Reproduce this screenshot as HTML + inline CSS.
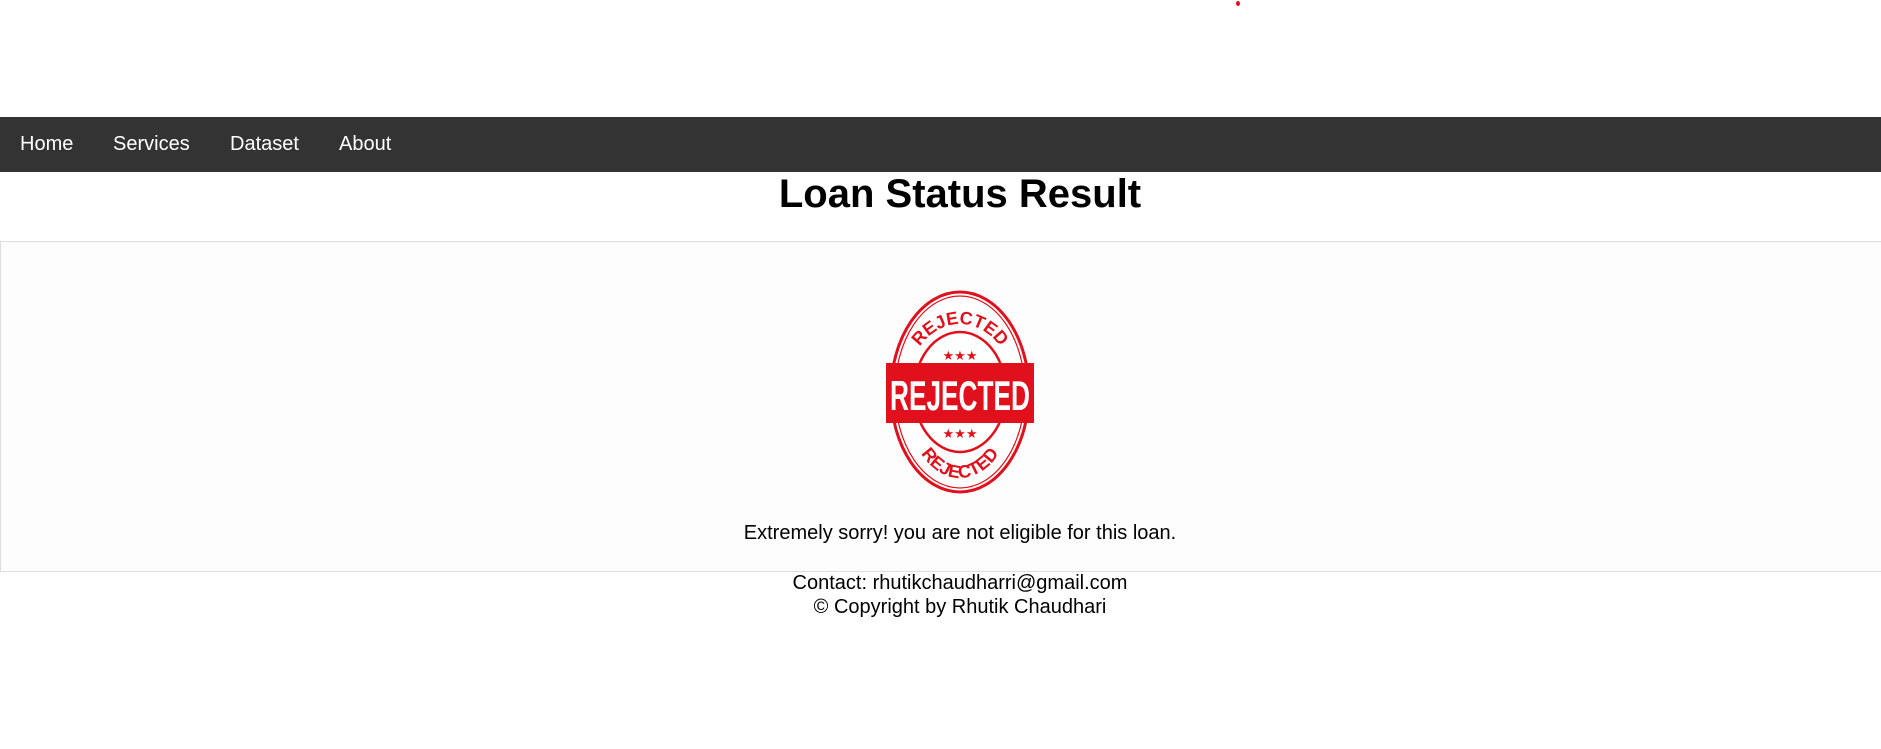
<!DOCTYPE html>
<html><head><meta charset="utf-8">
<style>
html,body{margin:0;padding:0;width:1881px;height:749px;overflow:hidden;background:#fff;font-family:"Liberation Sans",Arial,sans-serif;position:relative}
.dot{position:absolute;left:1236px;top:1px;width:4px;height:5px;border-radius:50%;background:#e0101c}
.nav{position:absolute;left:0;top:117px;width:1881px;height:55px;background:#333}
.nav a{position:absolute;top:0;line-height:55px;color:#fff;font-size:20px;text-decoration:none}
h1{position:absolute;left:0;width:1920px;top:169px;margin:0;text-align:center;font-size:40px;line-height:50px;font-weight:bold;color:#000}
.box{position:absolute;left:0;top:241px;width:1920px;height:329px;border:1.5px solid #ddd;background:#fdfdfd}
.msg{position:absolute;left:0;width:1920px;top:520px;text-align:center;font-size:20px;line-height:26px;color:#000}
.foot{position:absolute;left:0;width:1920px;top:571px;text-align:center;font-size:20px;line-height:24px;color:#000}
svg{position:absolute;left:880px;top:288px}
</style></head><body>
<div class="dot"></div>
<div class="nav">
<a style="left:20px">Home</a><a style="left:113px">Services</a><a style="left:230px">Dataset</a><a style="left:339px">About</a>
</div>
<h1>Loan Status Result</h1>
<div class="box"></div>
<svg width="160" height="210" viewBox="0 0 160 210">
<ellipse cx="80" cy="104" rx="69" ry="100" fill="#fff" stroke="#e0101c" stroke-width="3"/>
<ellipse cx="80" cy="104" rx="65" ry="96" fill="none" stroke="#e0101c" stroke-width="1.2"/>
<ellipse cx="80" cy="104" rx="46" ry="60" fill="none" stroke="#e0101c" stroke-width="2.5"/>
<path id="tp" d="M26,104 A54,68 0 0 1 134,104" fill="none"/>
<path id="bp" d="M24,104 A56,86 0 0 0 136,104" fill="none"/>
<text font-family="Liberation Sans,sans-serif" font-weight="bold" font-size="18" fill="#e0101c"><textPath href="#tp" startOffset="50%" text-anchor="middle">REJECTED</textPath></text>
<text font-family="Liberation Sans,sans-serif" font-weight="bold" font-size="18" fill="#e0101c"><textPath href="#bp" startOffset="50%" text-anchor="middle">REJECTED</textPath></text>
<text x="80" y="72" text-anchor="middle" font-size="13" fill="#e0101c">★★★</text>
<text x="80" y="150" text-anchor="middle" font-size="13" fill="#e0101c">★★★</text>
<rect x="6" y="75" width="148" height="60" fill="#e0101c"/>
<text x="80" y="122" text-anchor="middle" font-family="Liberation Sans,sans-serif" font-weight="bold" font-size="42" fill="#fff" textLength="140" lengthAdjust="spacingAndGlyphs">REJECTED</text>
</svg>
<div class="msg">Extremely sorry! you are not eligible for this loan.</div>
<div class="foot">Contact: rhutikchaudharri@gmail.com<br>© Copyright by Rhutik Chaudhari</div>
</body></html>
